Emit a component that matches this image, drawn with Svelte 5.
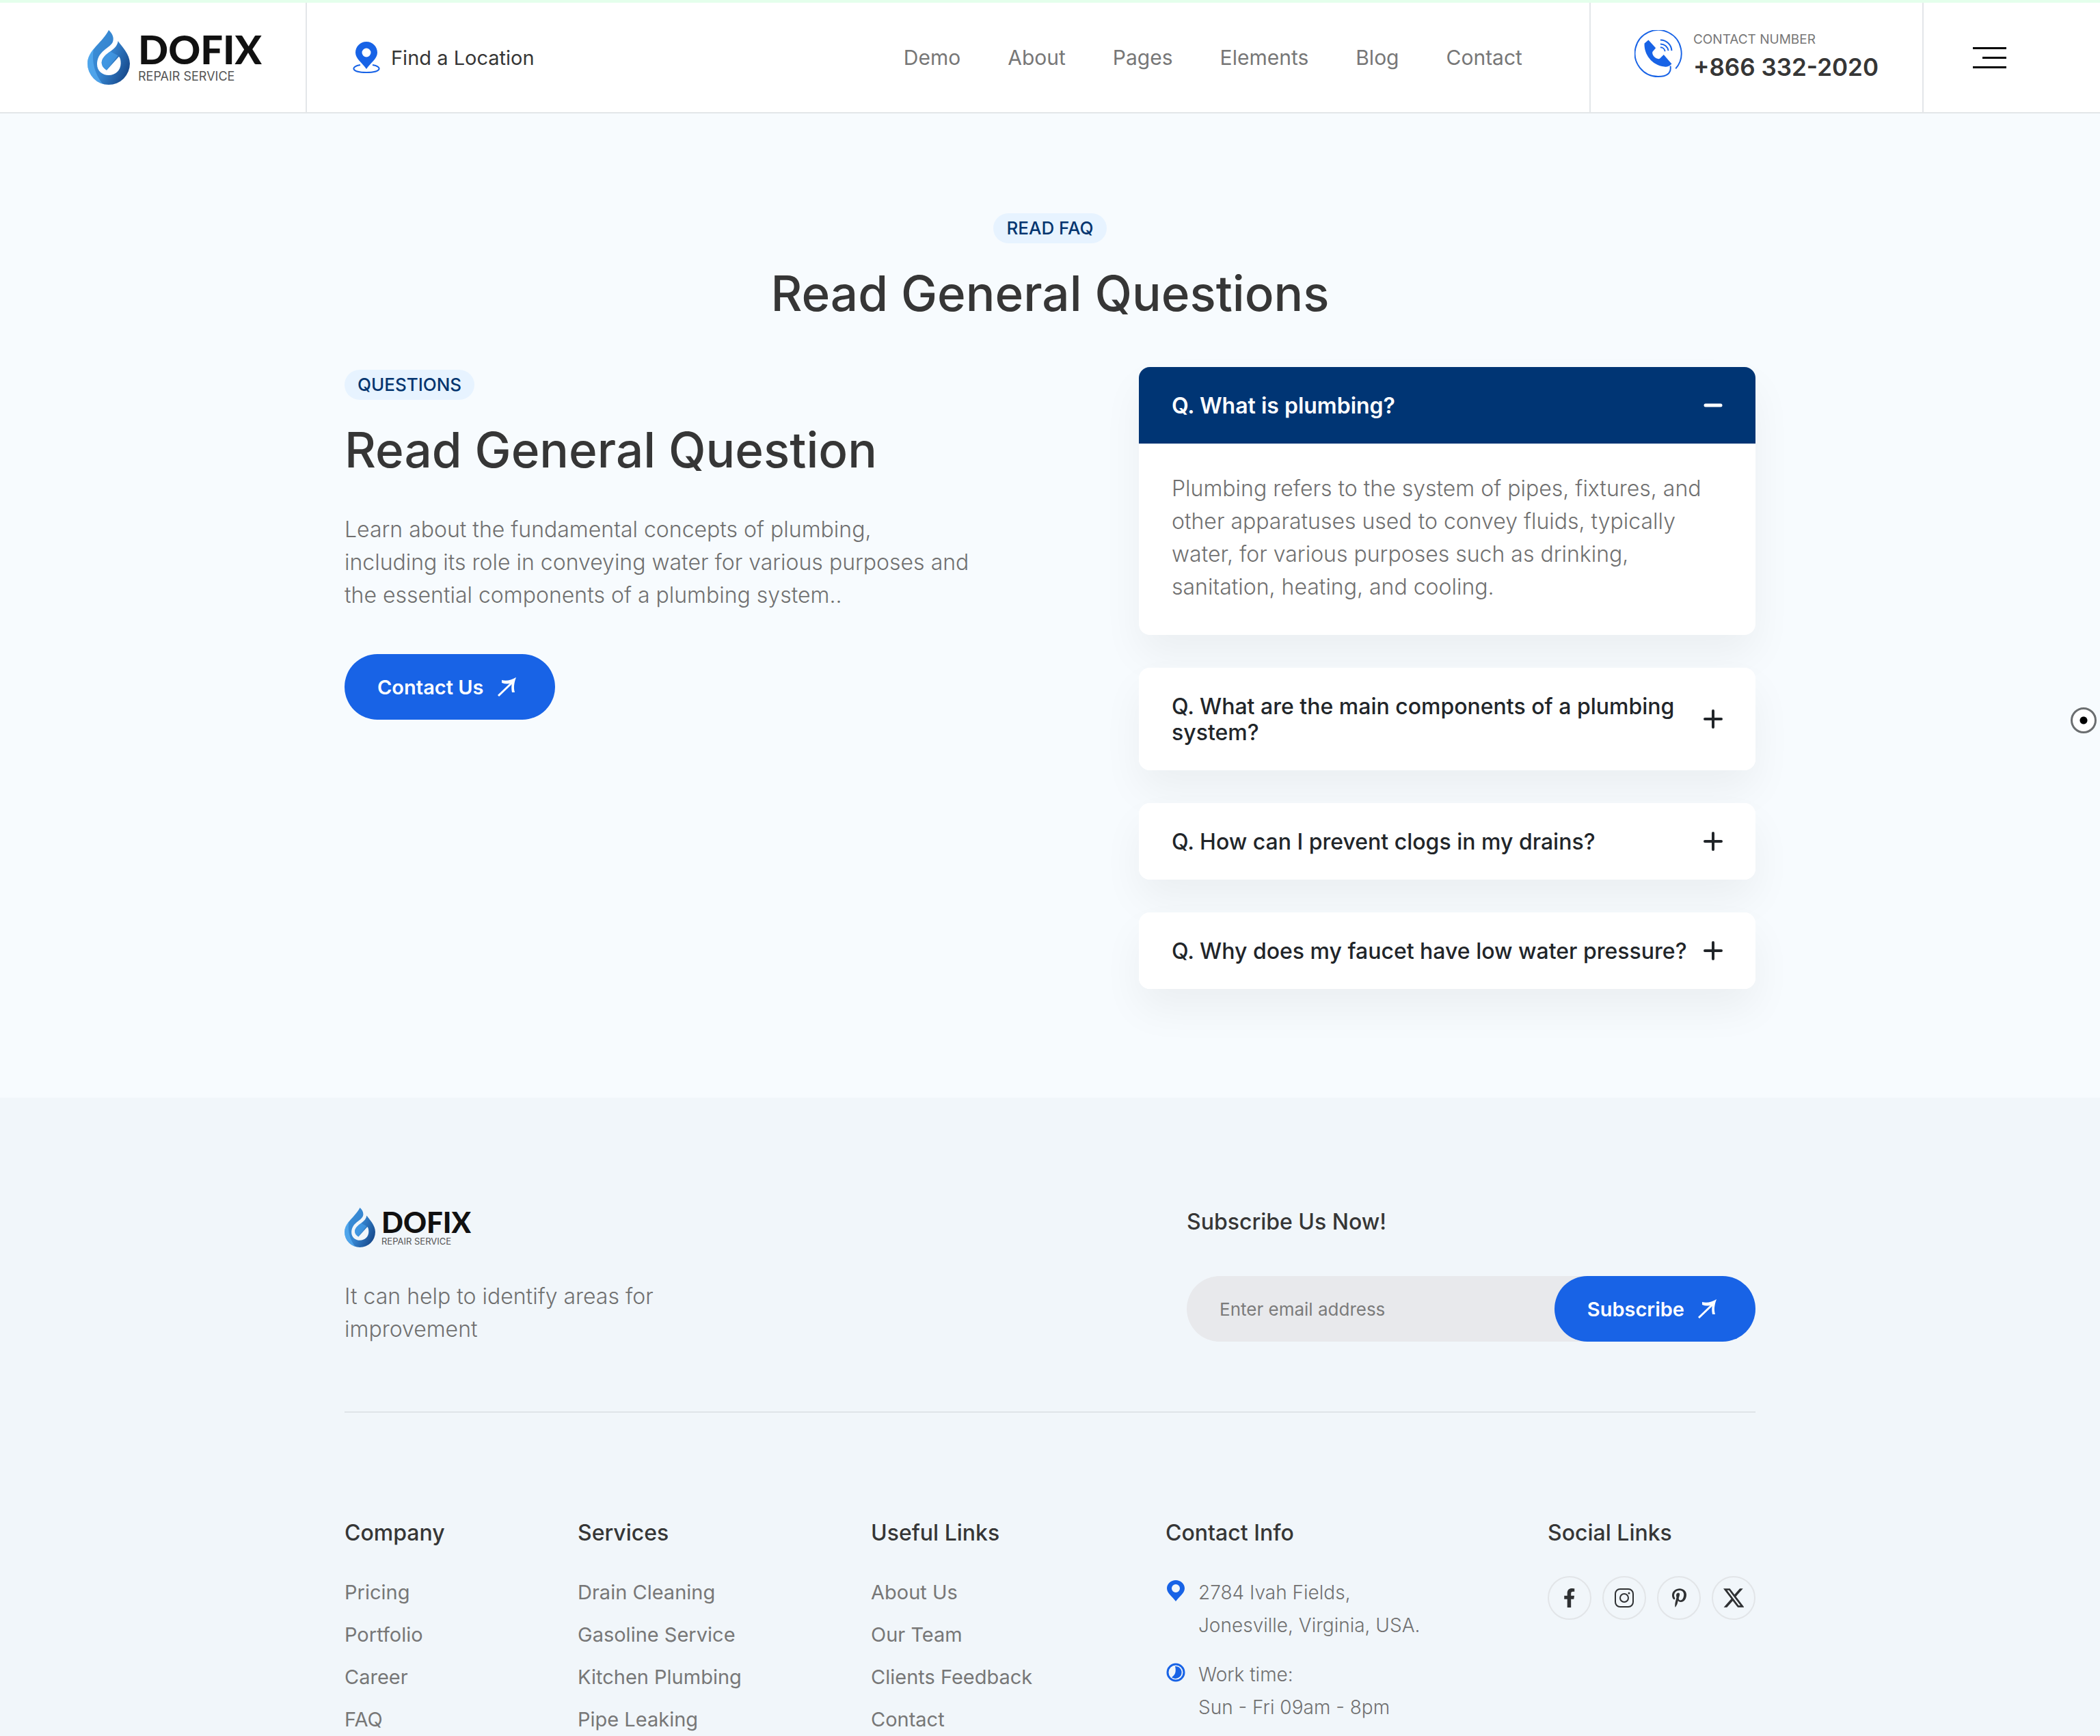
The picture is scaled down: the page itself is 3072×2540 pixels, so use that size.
<script>
  const navItems = ['Demo', 'About', 'Pages', 'Elements', 'Blog', 'Contact'];

  const faqs = [
    {
      q: 'Q. What is plumbing?',
      a: 'Plumbing refers to the system of pipes, fixtures, and other apparatuses used to convey fluids, typically water, for various purposes such as drinking, sanitation, heating, and cooling.'
    },
    {
      q: 'Q. What are the main components of a plumbing system?',
      a: 'Supply lines, drains, vents, fixtures and shut-off valves.'
    },
    {
      q: 'Q. How can I prevent clogs in my drains?',
      a: 'Use drain strainers and keep grease out of the sink.'
    },
    {
      q: 'Q. Why does my faucet have low water pressure?',
      a: 'A blocked aerator or a partly closed valve is the usual cause.'
    }
  ];

  const linkGroups = [
    { title: 'Company', links: ['Pricing', 'Portfolio', 'Career', 'FAQ'] },
    { title: 'Services', links: ['Drain Cleaning', 'Gasoline Service', 'Kitchen Plumbing', 'Pipe Leaking'] },
    { title: 'Useful Links', links: ['About Us', 'Our Team', 'Clients Feedback', 'Contact'] }
  ];

  let open = $state(0);
  let email = $state('');
</script>

{#snippet drop(id)}
  <svg class="drop" viewBox="0 0 186 240" aria-hidden="true">
    <defs>
      <linearGradient id={id} x1="0" y1="0.3" x2="1" y2="0.9">
        <stop offset="0" stop-color="#3b8fd8" />
        <stop offset="0.45" stop-color="#3584cf" />
        <stop offset="1" stop-color="#123f80" />
      </linearGradient>
    </defs>
    <path fill="url(#{id})" d="M93 0C108 14 118 32 111 52C104 68 88 76 74 88C52 106 42 126 42 150C42 180 66 198 93 198C122 198 146 176 146 146C146 132 144 122 138 116L84 176C70 168 62 156 62 142C64 122 80 108 100 94C120 80 132 66 134 48C150 72 186 105 186 147A93 93 0 0 1 0 147C0 90 70 50 93 0Z" />
    <path fill="#5fb8fa" opacity="0.6" d="M27 82C10 102 0 122 0 147C0 190 32 226 66 236C34 196 16 140 27 82Z" />
    <path fill="#4aa3ee" opacity="0.6" d="M62 142C64 122 80 108 100 94L134 112L84 176C70 168 62 156 62 142Z" />
  </svg>
{/snippet}

{#snippet arrow()}
  <svg class="arrow" viewBox="0 0 28 28" aria-hidden="true">
    <path d="M1 27L24 5" fill="none" stroke="#fff" stroke-width="3" />
    <path d="M6 4C13 6 20 4 27 0C24 8 23 15 25 22L21 22C20 17 20 13 21 8C16 10 11 10 6 8Z" fill="#fff" />
  </svg>
{/snippet}

<div class="page">
  <header>
    <a class="logo" href="#home">
      {@render drop('drop-head')}
      <span class="logo-text"><b>DOFIX</b><small>REPAIR SERVICE</small></span>
    </a>
    <a class="location" href="#location">
      <svg viewBox="0 0 40 46" aria-hidden="true">
        <path fill="#1863e6" fill-rule="evenodd" d="M20 0C29 0 36 7 36 16C36 25 26 31 20 40C14 31 4 25 4 16C4 7 11 0 20 0ZM20 9.500A6.500 6.500 0 1 0 20 22.500A6.500 6.500 0 1 0 20 9.500Z" />
        <path fill="none" stroke="#1863e6" stroke-width="2" d="M11 34C-3 36 -3 45 20 45C43 45 43 36 29 34" />
      </svg>
      Find a Location
    </a>
    <nav aria-label="Main">
      {#each navItems as item}<a href="#{item.toLowerCase()}">{item}</a>{/each}
    </nav>
    <div class="phone">
      <svg viewBox="0 0 72 72" aria-hidden="true">
        <path fill="none" stroke="#1863e6" stroke-width="2" d="M62 58A35 35 0 1 0 36 70C47 70 56 66 54 54" />
        <path fill="#1863e6" d="M21 15L32 27L27 33C26 39 34 45 38 43L44 37L56 51C52 55 48 56 45 55C26 53 14 36 15 20Z" />
        <path fill="none" stroke="#1863e6" stroke-width="2" d="M39 15A17 17 0 0 1 56 31M39 21A12 12 0 0 1 51 31M39 26A7 7 0 0 1 46 32" />
      </svg>
      <div class="phone-text">
        <span>CONTACT NUMBER</span>
        <a href="tel:+8663322020">+866 332-2020</a>
      </div>
    </div>
    <div class="menu">
      <button type="button" aria-label="Open menu"><i></i><i></i><i></i></button>
    </div>
  </header>

  <main>
    <div class="container">
      <div class="intro">
        <span class="pill">READ FAQ</span>
        <h1>Read General Questions</h1>
      </div>
      <div class="columns">
        <section class="about">
          <span class="pill">QUESTIONS</span>
          <h2>Read General Question</h2>
          <p>
            Learn about the fundamental concepts of plumbing,<br />
            including its role in conveying water for various purposes and<br />
            the essential components of a plumbing system..
          </p>
          <a class="cta" href="#contact">Contact Us {@render arrow()}</a>
        </section>
        <section class="faq" aria-label="Questions">
          {#each faqs as item, i}
            <article class:open={open === i}>
              <button type="button" aria-expanded={open === i} onclick={() => (open = open === i ? -1 : i)}>
                <span>{item.q}</span>
                <svg viewBox="0 0 28 28" aria-hidden="true">
                  {#if open === i}
                    <path d="M3 14H25" />
                  {:else}
                    <path d="M2 14H26M14 2V26" />
                  {/if}
                </svg>
              </button>
              {#if open === i}<p>{item.a}</p>{/if}
            </article>
          {/each}
        </section>
      </div>
    </div>
  </main>

  <footer>
    <div class="container">
      <div class="top">
        <div class="brand">
          <a class="logo small" href="#home">
            {@render drop('drop-foot')}
            <span class="logo-text"><b>DOFIX</b><small>REPAIR SERVICE</small></span>
          </a>
          <p>It can help to identify areas for improvement</p>
        </div>
        <form onsubmit={(e) => e.preventDefault()}>
          <label for="email">Subscribe Us Now!</label>
          <div class="field">
            <input id="email" type="email" placeholder="Enter email address" bind:value={email} />
            <button class="cta" type="submit">Subscribe {@render arrow()}</button>
          </div>
        </form>
      </div>
      <div class="links">
        {#each linkGroups as group}
          <div>
            <h3>{group.title}</h3>
            <ul>
              {#each group.links as link}<li><a href="#{link.toLowerCase().replaceAll(' ', '-')}">{link}</a></li>{/each}
            </ul>
          </div>
        {/each}
        <div>
          <h3>Contact Info</h3>
          <div class="info">
            <svg viewBox="0 0 30 32" aria-hidden="true">
              <path fill="#1863e6" fill-rule="evenodd" d="M15 0C22 0 28 5 28 12C28 19 20 24 15 31C10 24 2 19 2 12C2 5 8 0 15 0ZM15 6A6 6 0 1 0 15 18A6 6 0 1 0 15 6Z" />
            </svg>
            <address>2784 Ivah Fields,<br />Jonesville, Virginia, USA.</address>
          </div>
          <div class="info">
            <svg viewBox="0 0 30 32" aria-hidden="true">
              <circle cx="15" cy="15" r="12" fill="none" stroke="#1863e6" stroke-width="3" />
              <path fill="#1863e6" d="M14 6A9 9 0 1 1 9 22C14 19 16 14 14 6Z" />
            </svg>
            <p>Work time:<br />Sun - Fri 09am - 8pm</p>
          </div>
        </div>
        <div>
          <h3>Social Links</h3>
          <div class="social">
            <a href="#facebook" aria-label="Facebook">
              <svg viewBox="0 0 320 512"><path d="M279.140 288l14.220-92.660h-88.910v-60.130c0-25.350 12.420-50.060 52.240-50.060h40.420V6.260S260.430 0 225.360 0c-73.220 0-121.080 44.380-121.080 124.720v70.620H22.890V288h81.390v224h100.170V288z" /></svg>
            </a>
            <a href="#instagram" aria-label="Instagram">
              <svg viewBox="0 0 28 28">
                <g fill="none" stroke="#2f3133" stroke-width="2">
                  <rect x="1" y="1" width="26" height="26" rx="7" />
                  <circle cx="14" cy="14" r="6" />
                </g>
                <circle cx="21" cy="7" r="1.500" />
              </svg>
            </a>
            <a href="#pinterest" aria-label="Pinterest">
              <svg viewBox="0 0 384 512"><path d="M204 6.500C101.400 6.500 0 74.900 0 185.600 0 256 39.600 296 63.600 296c9.900 0 15.600-27.600 15.600-35.400 0-9.300-23.700-29.100-23.700-67.800 0-80.400 61.200-137.400 140.400-137.400 68.100 0 118.500 38.700 118.500 109.800 0 53.100-21.300 152.700-90.300 152.700-24.900 0-46.200-18-46.200-43.800 0-37.800 26.400-74.400 26.400-113.400 0-66.200-93.900-54.200-93.900 25.800 0 16.800 2.100 35.400 9.600 50.700-13.800 59.400-42 147.900-42 209.100 0 18.900 2.700 37.500 4.500 56.400 3.400 3.800 1.700 3.400 6.900 1.500 50.400-69 48.600-82.500 71.400-172.800 12.300 23.400 44.100 36 69.300 36 106.200 0 153.900-103.500 153.900-196.800C384 71.300 298.200 6.500 204 6.500z" /></svg>
            </a>
            <a href="#x" aria-label="X">
              <svg viewBox="0 1 24 22"><path d="M18.901 1.153h3.680l-8.040 9.190L24 22.846h-7.406l-5.800-7.584-6.638 7.584H.474l8.600-9.830L0 1.154h7.594l5.243 6.932ZM17.610 20.644h2.039L6.486 3.240H4.298Z" /></svg>
            </a>
          </div>
        </div>
      </div>
    </div>
  </footer>

  <div class="pointer" aria-hidden="true"></div>
</div>

<style>
  :global(body) {
    margin: 0;
    font-family: Inter, 'Liberation Sans', sans-serif;
    color: #363636;
  }
  :global(#app) * {
    box-sizing: border-box;
  }
  .page {
    min-height: 100vh;
    display: flex;
    flex-direction: column;
    position: relative;
  }
  a {
    color: inherit;
    text-decoration: none;
  }
  h1, h2, h3, p, ul {
    margin: 0;
    padding: 0;
    list-style: none;
    font-weight: 500;
  }
  button {
    font: inherit;
    border: 0;
    cursor: pointer;
  }
  .container {
    width: 100%;
    max-width: 2064px;
    margin: 0 auto;
  }

  /* Header */
  header {
    display: flex;
    align-items: stretch;
    height: 166px;
    border-top: 4px solid #e4ffec;
    border-bottom: 2px solid #e3e6e9;
    background: #fff;
    font-size: 30px;
  }
  .logo {
    display: flex;
    align-items: center;
    gap: 12px;
  }
  .logo .drop {
    width: 62px;
    height: 80px;
  }
  .logo-text {
    display: flex;
    flex-direction: column;
    gap: 4px;
  }
  .logo b {
    font-family: Lato, Inter, sans-serif;
    font-size: 58px;
    line-height: 52px;
    font-weight: 900;
    color: #111;
  }
  .logo small {
    font-size: 18px;
    line-height: 20px;
    color: #555;
  }
  header .logo {
    padding: 0 64px 0 128px;
    border-right: 2px solid #e3e6e9;
  }
  .location {
    display: flex;
    align-items: center;
    gap: 16px;
    padding-left: 67px;
    font-size: 29px;
  }
  .location svg {
    width: 40px;
    height: 46px;
  }
  nav {
    display: flex;
    align-items: center;
    gap: 69px;
    margin-left: auto;
    padding-right: 98px;
    color: #777;
  }
  .phone {
    display: flex;
    align-items: center;
    gap: 16px;
    padding: 0 64px;
    border-left: 2px solid #e3e6e9;
    border-right: 2px solid #e3e6e9;
  }
  .phone > svg {
    width: 70px;
    height: 70px;
    margin-bottom: 10px;
  }
  .phone-text {
    display: flex;
    flex-direction: column;
    gap: 4px;
  }
  .phone span {
    font-size: 19px;
    line-height: 24px;
    color: #777;
  }
  .phone a {
    font-size: 35px;
    line-height: 48px;
    font-weight: 600;
  }
  .menu {
    display: flex;
    align-items: center;
    padding: 0 137px 0 72px;
  }
  .menu button {
    display: flex;
    flex-direction: column;
    align-items: flex-end;
    gap: 11px;
    padding: 0;
    background: none;
  }
  .menu i {
    width: 49px;
    height: 3px;
    background: #000;
  }
  .menu i:nth-child(2) {
    width: 35px;
  }

  /* Questions */
  main {
    padding: 146px 48px 159px;
    background: #f7fbfe;
  }
  .intro {
    text-align: center;
  }
  .pill {
    display: inline-block;
    vertical-align: top;
    padding: 0 19px;
    border-radius: 22px;
    background: #e7f3ff;
    color: #04356f;
    font-size: 26px;
    line-height: 44px;
    font-weight: 500;
  }
  h1, h2 {
    margin-top: 29px;
    font-size: 71px;
    line-height: 88px;
  }
  .columns {
    display: flex;
    justify-content: space-between;
    margin-top: 64px;
  }
  .about {
    padding-top: 4px;
  }
  p, address {
    font-size: 32px;
    line-height: 48px;
    font-weight: 300;
    font-style: normal;
    color: #707070;
  }
  .about p {
    margin: 49px 0 62px;
  }
  .cta {
    display: inline-flex;
    align-items: center;
    gap: 20px;
    height: 96px;
    padding: 0 56px 0 48px;
    border-radius: 48px;
    background: #1863e6;
    color: #fff;
    font-size: 29px;
    font-weight: 600;
  }
  .arrow {
    width: 28px;
    height: 28px;
  }
  .faq {
    display: flex;
    flex-direction: column;
    gap: 48px;
    width: 902px;
  }
  article {
    border-radius: 16px;
    background: #fff;
    box-shadow: 0 30px 60px rgba(0, 0, 0, 0.05);
  }
  article button {
    display: flex;
    align-items: center;
    justify-content: space-between;
    gap: 16px;
    width: 100%;
    padding: 38px 48px 36px;
    border-radius: 16px;
    background: #fff;
    color: #212529;
    font-size: 32px;
    line-height: 38px;
    font-weight: 500;
    text-align: left;
  }
  article button svg {
    flex: none;
    width: 28px;
    height: 28px;
    margin-bottom: 3px;
    fill: none;
    stroke: currentColor;
    stroke-width: 4;
    stroke-linecap: round;
  }
  .open button {
    border-radius: 16px 16px 0 0;
    background: #003574;
    color: #fff;
    font-weight: 600;
  }
  .open button svg {
    stroke-width: 5;
  }
  article p {
    padding: 42px 48px 46px;
  }

  /* Footer */
  footer {
    flex: 1;
    padding: 161px 48px 0;
    background: #f1f6fa;
  }
  .top {
    display: flex;
    justify-content: space-between;
    padding-bottom: 96px;
    border-bottom: 2px solid #dfe4e8;
  }
  .small {
    gap: 9px;
  }
  .small .drop {
    width: 45px;
    height: 58px;
  }
  .small .logo-text {
    gap: 2px;
  }
  .small b {
    font-size: 42px;
    line-height: 38px;
  }
  .small small {
    font-size: 13px;
    line-height: 14px;
  }
  .brand p {
    max-width: 480px;
    margin-top: 48px;
  }
  form {
    width: 832px;
  }
  label {
    display: block;
    font-size: 32px;
    line-height: 42px;
    font-weight: 500;
  }
  .field {
    display: flex;
    margin-top: 58px;
    border-radius: 48px;
    background: #e8e9ec;
  }
  .field input {
    flex: 1;
    min-width: 0;
    padding: 0 48px;
    border: 0;
    outline: 0;
    background: none;
    font: 400 26px Inter, 'Liberation Sans', sans-serif;
    color: #363636;
  }
  .field input::placeholder {
    color: #7b7b7b;
    opacity: 1;
  }
  .links {
    display: grid;
    grid-template-columns: 341fr 429fr 431fr 559fr 304fr;
    padding-top: 156px;
  }
  h3 {
    font-size: 32px;
    line-height: 40px;
    margin-bottom: 43px;
  }
  ul {
    display: flex;
    flex-direction: column;
    gap: 24px;
    padding-top: 5px;
  }
  li {
    font-size: 29px;
    line-height: 38px;
    font-weight: 400;
    color: #777;
  }
  .info {
    display: flex;
    gap: 18px;
    margin-bottom: 24px;
  }
  .info svg {
    width: 30px;
    height: 32px;
    margin-top: 6px;
  }
  .info p,
  .info address {
    font-size: 28px;
  }
  .social {
    display: flex;
    gap: 16px;
  }
  .social a {
    display: flex;
    align-items: center;
    justify-content: center;
    width: 64px;
    height: 64px;
    border: 2px solid #e2e5e8;
    border-radius: 50%;
  }
  .social svg {
    height: 28px;
    fill: #2f3133;
  }

  /* Ring with a centre dot that floats over the page edge */
  .pointer {
    position: absolute;
    top: 1035px;
    right: 5px;
    width: 38px;
    height: 38px;
    border: 3px solid #6b6e70;
    border-radius: 50%;
    background: radial-gradient(circle, #000 5px, #fff 6px);
  }
</style>
